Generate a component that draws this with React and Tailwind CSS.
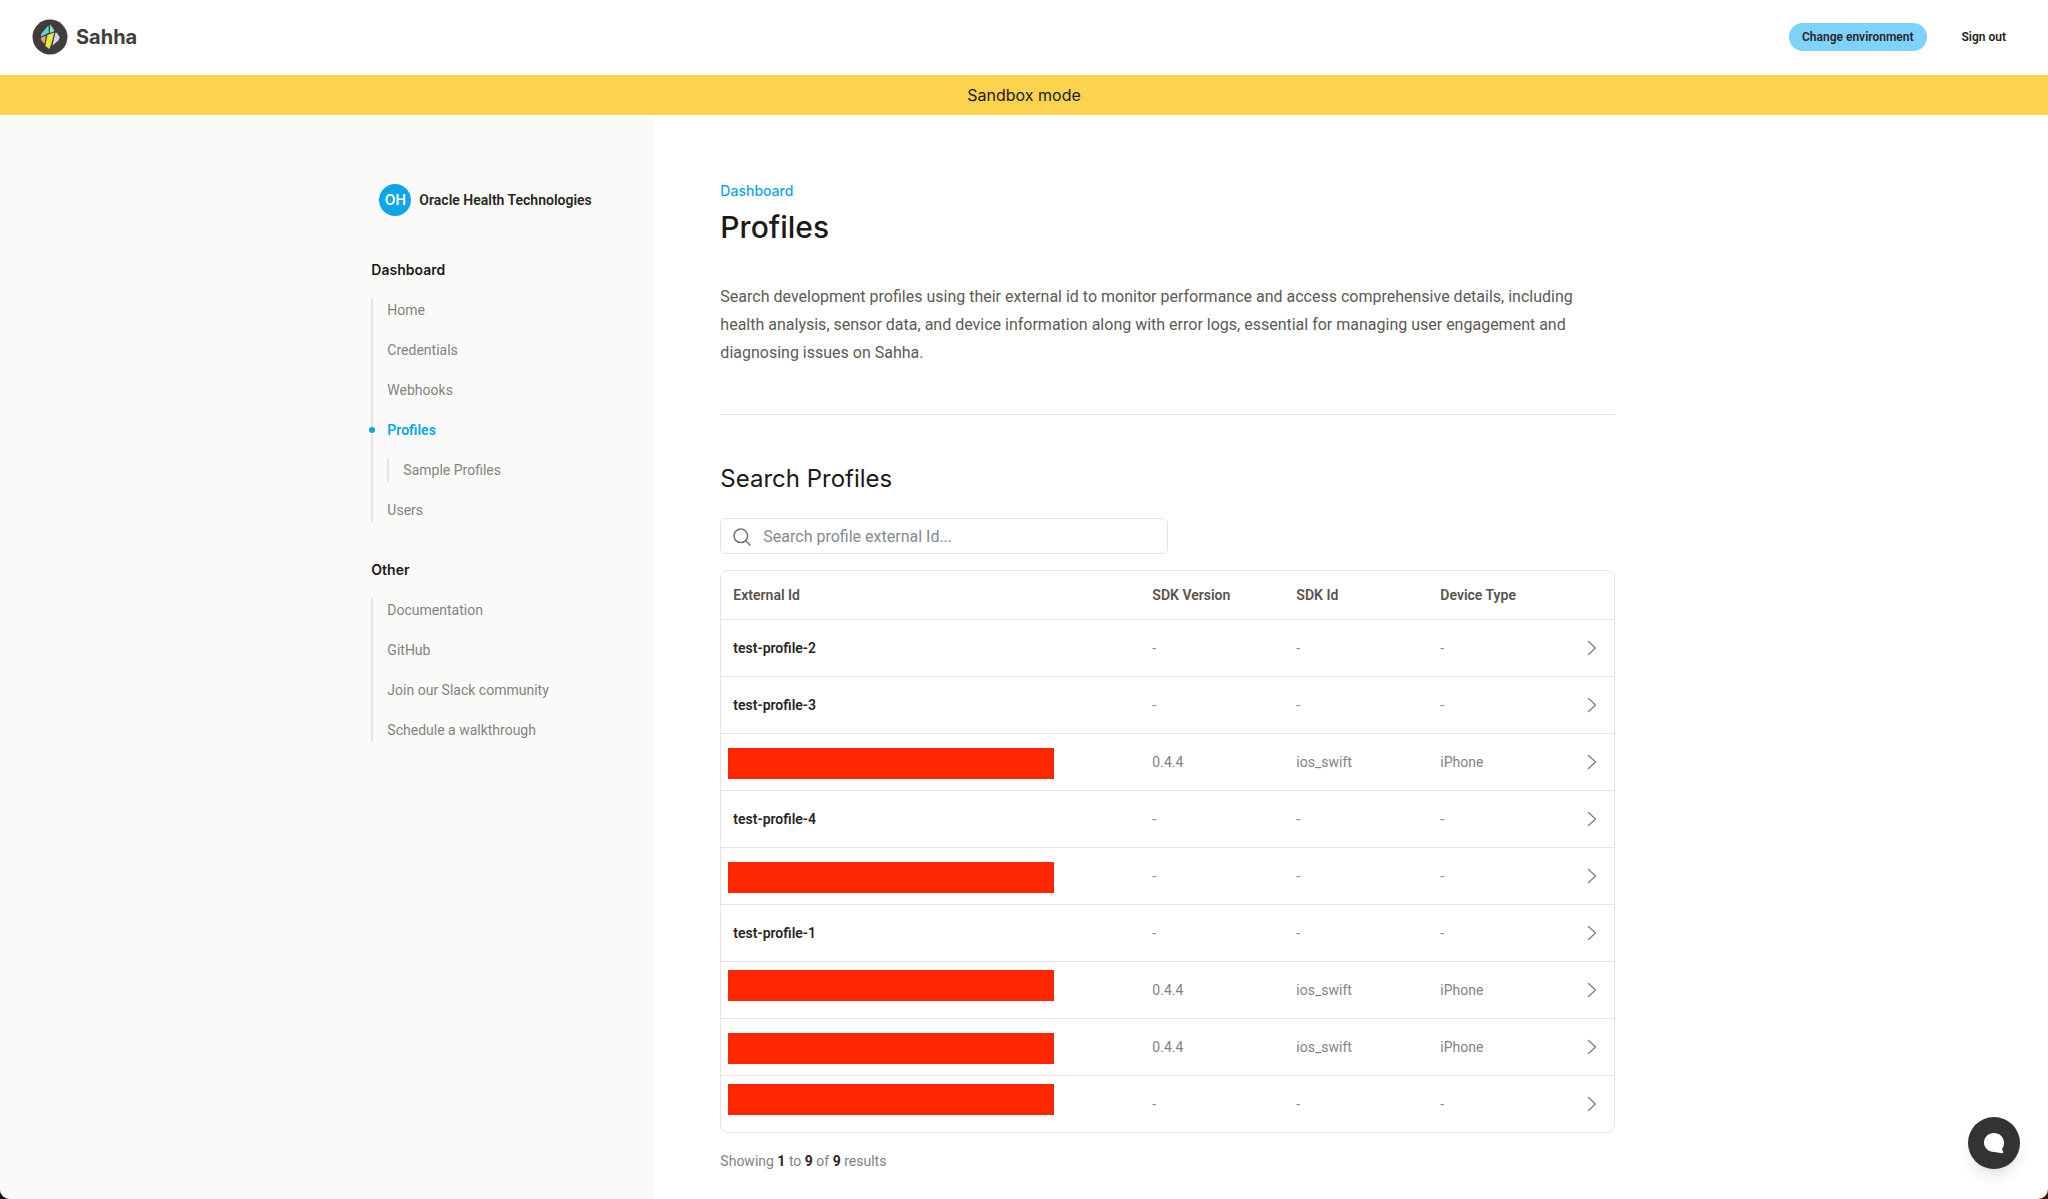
const HEADING = "font-['Inter',sans-serif]";

const dashboardLinks = [
  { label: "Home" },
  { label: "Credentials" },
  { label: "Webhooks" },
  { label: "Profiles", active: true },
  { label: "Sample Profiles", nested: true },
  { label: "Users" },
];

const otherLinks = [
  { label: "Documentation" },
  { label: "GitHub" },
  { label: "Join our Slack community" },
  { label: "Schedule a walkthrough" },
];

const profiles = [
  { id: "test-profile-2" },
  { id: "test-profile-3" },
  { redacted: "low", version: "0.4.4", sdk: "ios_swift", device: "iPhone" },
  { id: "test-profile-4" },
  { redacted: "low" },
  { id: "test-profile-1" },
  { redacted: "high", version: "0.4.4", sdk: "ios_swift", device: "iPhone" },
  { redacted: "low", version: "0.4.4", sdk: "ios_swift", device: "iPhone" },
  { redacted: "high" },
];

function Logo() {
  return (
    <svg viewBox="0 0 36 36" className="size-9" aria-hidden="true">
      <circle cx="18" cy="18" r="17.5" fill="#403d3b" />
      <path d="M16.6 6.2 L16.8 13.8 L9.2 17.4 C8.8 15.800 9.600 14.200 11.200 12.400 Z" fill="#5fd6dc" />
      <path d="M18.2 5.2 L22.4 11.6 L21.600 12.600 L17.800 14 Z" fill="#8ce6c4" />
      <path d="M8.800 18.800 L13.800 16.800 L12.800 24.800 C10.800 23.400 8.800 21.600 8.800 18.800 Z" fill="#f69a84" />
      <path d="M15.400 16 L22.200 13.400 L19.600 23.800 L17.400 30 L13.400 27 Z" fill="#e6ec3c" />
      <path d="M23.400 13.800 L25 14 L27.800 18.400 L26.400 21.400 L20.400 26.800 Z" fill="#d9d2f6" />
    </svg>
  );
}

function Header() {
  return (
    <header className="flex h-[75px] items-center justify-between px-8 pb-0.5">
      <a href="#" className="flex items-center gap-2">
        <Logo />
        <span className={`${HEADING} text-xl font-bold text-[#403d3b]`}>Sahha</span>
      </a>
      <div className="flex items-center">
        <button type="button" className="h-7 rounded-full bg-[#7dd3fc] px-[13px] text-xs font-semibold text-stone-800">
          Change environment
        </button>
        <button type="button" className="h-7 pr-2.5 pl-[35px] text-xs font-semibold text-stone-900">
          Sign out
        </button>
      </div>
    </header>
  );
}

function NavItem({ label, active, nested }) {
  if (nested) {
    return (
      <li className="ml-[14px] border-l-2 border-stone-200 pl-[14px]">
        <a href="#" className="block">{label}</a>
      </li>
    );
  }
  return (
    <li className="relative pl-[14px]">
      {active && <span className="absolute top-[9px] -left-1 size-1.5 rounded-full bg-[#0ea5e9]" />}
      <a href="#" className={active ? "block font-semibold text-[#0ea5e9]" : "block"}>
        {label}
      </a>
    </li>
  );
}

function NavSection({ title, links }) {
  return (
    <section>
      <h2 className={`${HEADING} text-sm/6 font-semibold text-stone-900`}>{title}</h2>
      <ul className="mt-4 flex flex-col gap-4 border-l-2 border-stone-200 text-sm/6 text-[#85827f]">
        {links.map((link) => (
          <NavItem key={link.label} {...link} />
        ))}
      </ul>
    </section>
  );
}

function Sidebar() {
  return (
    <aside className="flex w-[32%] shrink-0 justify-end bg-[#fafaf9] pt-[69px]">
      <div className="w-[284px]">
        <div className="flex items-center gap-2 pl-2">
          <span className={`${HEADING} flex size-8 items-center justify-center rounded-full bg-[#0ea5e9] text-sm font-semibold text-white`}>
            OH
          </span>
          <span className="text-sm font-semibold text-stone-800">Oracle Health Technologies</span>
        </div>
        <nav className="mt-[42px] flex flex-col gap-9">
          <NavSection title="Dashboard" links={dashboardLinks} />
          <NavSection title="Other" links={otherLinks} />
        </nav>
      </div>
    </aside>
  );
}

function Chevron() {
  return (
    <svg viewBox="0 0 10 16" className="h-4 w-2.5" fill="none" stroke="#8a8580" strokeWidth="1.5" strokeLinecap="round" strokeLinejoin="round" aria-hidden="true">
      <path d="M1.5 1.5 8.5 8l-7 6.5" />
    </svg>
  );
}

function ProfileRow({ id, redacted, version = "-", sdk = "-", device = "-" }) {
  return (
    <tr className="border-t border-stone-200">
      <td className="h-[57px] p-0">
        {redacted ? (
          <div className={redacted === "low" ? "flex h-14 pt-3.5 pl-[7px]" : "flex h-14 pt-2 pl-[7px]"}>
            <span className="block h-[31px] w-[326px] bg-[#ff2600]" />
          </div>
        ) : (
          <span className="block pl-3 font-semibold text-stone-800">{id}</span>
        )}
      </td>
      <td className="p-0">{version}</td>
      <td className="p-0">{sdk}</td>
      <td className="p-0">{device}</td>
      <td className="p-0">
        <a href="#" aria-label="Open profile" className="flex justify-end pr-[17px]">
          <Chevron />
        </a>
      </td>
    </tr>
  );
}

function ProfilesTable() {
  return (
    <div className="mt-4 rounded-lg border border-stone-200">
      <table className="w-full table-fixed text-left text-sm text-[#85827f]">
        <thead>
          <tr className="h-12 text-stone-600">
            <th className="w-[431px] p-0 pl-3 font-semibold">External Id</th>
            <th className="w-36 p-0 font-semibold">SDK Version</th>
            <th className="w-36 p-0 font-semibold">SDK Id</th>
            <th className="w-32 p-0 font-semibold">Device Type</th>
            <th className="p-0" aria-label="Actions" />
          </tr>
        </thead>
        <tbody>
          {profiles.map((profile, index) => (
            <ProfileRow key={index} {...profile} />
          ))}
        </tbody>
      </table>
    </div>
  );
}

function Main() {
  return (
    <main className="min-w-0 flex-1 pt-16 pr-16 pl-[65px]">
      <div className="max-w-[895px]">
        <p className={`${HEADING} text-sm/6 font-medium text-[#0ea5e9]`}>Dashboard</p>
        <h1 className={`${HEADING} mt-1 text-3xl/10 font-medium text-stone-900`}>Profiles</h1>
        <p className="mt-9 text-base/7 text-[#5c5957]">
          Search development profiles using their external id to monitor performance and access comprehensive details,
          including health analysis, sensor data, and device information along with error logs, essential for managing
          user engagement and diagnosing issues on Sahha.
        </p>
        <hr className="mt-[47px] border-stone-200" />
        <h2 className={`${HEADING} mt-12 text-2xl/8 text-stone-900`}>Search Profiles</h2>
        <div className="relative mt-[23px] w-1/2">
          <svg viewBox="0 0 18 18" className="absolute top-2.5 left-[13px] size-[18px]" fill="none" stroke="#78716c" strokeWidth="1.5" strokeLinecap="round" aria-hidden="true">
            <circle cx="7.8" cy="7.8" r="6.8" />
            <path d="m12.8 12.8 4.200 4.200" />
          </svg>
          <input
            type="text"
            aria-label="Search profiles"
            placeholder="Search profile external Id..."
            className="block h-9 w-full rounded-md border border-stone-200 bg-white pr-3 pl-[42px] text-base text-stone-800 placeholder:text-[#858992]"
          />
        </div>
        <ProfilesTable />
        <p className="mt-4 text-sm/6 text-[#85827f]">
          Showing <b className="font-bold text-stone-800">1</b> to <b className="font-bold text-stone-800">9</b> of{" "}
          <b className="font-bold text-stone-800">9</b> results
        </p>
      </div>
    </main>
  );
}

function ChatButton() {
  return (
    <button type="button" aria-label="Open chat" className="fixed right-7 bottom-[30px] flex size-[52px] items-center justify-center rounded-full bg-[#333333] shadow-lg">
      <svg viewBox="0 0 22 22" className="size-[22px]" fill="#ffffff" aria-hidden="true">
        <path d="M11 1C5.400 1 1 5.200 1 10.500S5.400 20 11 20l8.200 1.200c.9.100 1.300-.500 1-1.200l-1.200-3c1.300-1.700 2-3.800 2-6.300C21 5.200 16.600 1 11 1Z" />
      </svg>
    </button>
  );
}

export default function App() {
  return (
    <div className="bg-linear-to-r from-[#10151f] to-[#3a2010]">
      <div className="flex min-h-screen flex-col overflow-hidden rounded-b-[10px] bg-white font-['Roboto',sans-serif] antialiased">
        <Header />
        <div className={`${HEADING} flex h-10 items-center justify-center bg-[#fcd34d] text-base text-stone-900`}>
          Sandbox mode
        </div>
        <div className="flex flex-1">
          <Sidebar />
          <Main />
        </div>
        <ChatButton />
      </div>
    </div>
  );
}
